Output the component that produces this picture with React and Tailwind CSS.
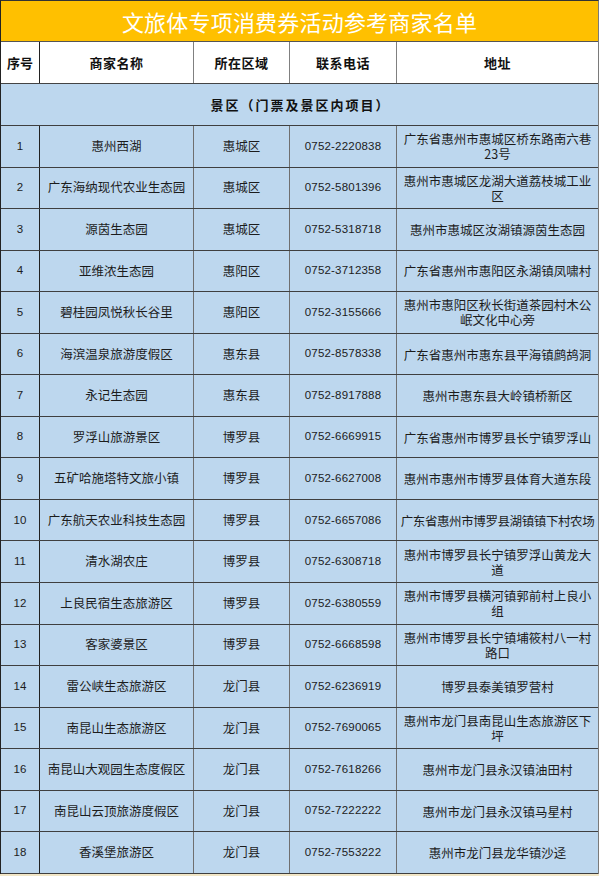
import React from "react";

const merchants = [
  ["1", "惠州西湖", "惠城区", "0752-2220838", "广东省惠州市惠城区桥东路南六巷23号"],
  ["2", "广东海纳现代农业生态园", "惠城区", "0752-5801396", "惠州市惠城区龙湖大道荔枝城工业区"],
  ["3", "源茵生态园", "惠城区", "0752-5318718", "惠州市惠城区汝湖镇源茵生态园"],
  ["4", "亚维浓生态园", "惠阳区", "0752-3712358", "广东省惠州市惠阳区永湖镇凤啸村"],
  ["5", "碧桂园凤悦秋长谷里", "惠阳区", "0752-3155666", "惠州市惠阳区秋长街道茶园村木公岷文化中心旁"],
  ["6", "海滨温泉旅游度假区", "惠东县", "0752-8578338", "广东省惠州市惠东县平海镇鹧鸪洞"],
  ["7", "永记生态园", "惠东县", "0752-8917888", "惠州市惠东县大岭镇桥新区"],
  ["8", "罗浮山旅游景区", "博罗县", "0752-6669915", "广东省惠州市博罗县长宁镇罗浮山"],
  ["9", "五矿哈施塔特文旅小镇", "博罗县", "0752-6627008", "惠州市惠州市博罗县体育大道东段"],
  ["10", "广东航天农业科技生态园", "博罗县", "0752-6657086", "广东省惠州市博罗县湖镇镇下村农场", true],
  ["11", "清水湖农庄", "博罗县", "0752-6308718", "惠州市博罗县长宁镇罗浮山黄龙大道"],
  ["12", "上良民宿生态旅游区", "博罗县", "0752-6380559", "惠州市博罗县横河镇郭前村上良小组"],
  ["13", "客家婆景区", "博罗县", "0752-6668598", "惠州市博罗县长宁镇埔筱村八一村路口"],
  ["14", "雷公峡生态旅游区", "龙门县", "0752-6236919", "博罗县泰美镇罗营村"],
  ["15", "南昆山生态旅游区", "龙门县", "0752-7690065", "惠州市龙门县南昆山生态旅游区下坪"],
  ["16", "南昆山大观园生态度假区", "龙门县", "0752-7618266", "惠州市龙门县永汉镇油田村"],
  ["17", "南昆山云顶旅游度假区", "龙门县", "0752-7222222", "惠州市龙门县永汉镇马星村"],
  ["18", "香溪堡旅游区", "龙门县", "0752-7553222", "惠州市龙门县龙华镇沙迳"],
];

const cols = "grid grid-cols-[39px_154px_96px_107px_201px]";

function HeaderRow() {
  const cell = "flex items-center justify-center font-bold text-[13px] tracking-[0.5px] text-[#111]";
  return (
    <div className={`${cols} h-[42px] bg-white border-b border-[#444]`}>
      <div className={`${cell} border-r border-[#222] tracking-[0px]`}>序号</div>
      <div className={`${cell} border-r border-[#808080]`}>商家名称</div>
      <div className={`${cell} border-r border-[#808080]`}>所在区域</div>
      <div className={`${cell} border-r border-[#808080]`}>联系电话</div>
      <div className={cell}>地址</div>
    </div>
  );
}

function MerchantRow({ row }) {
  const [no, name, area, phone, addr, tight] = row;
  const cell = "flex items-center justify-center text-center text-[#1c1c1c]";
  return (
    <div className={`${cols} h-[41.55px] bg-[#BDD7EE] border-b border-[#3f3f3f]`}>
      <div className={`${cell} border-r border-[#222] text-[11.5px] font-['Liberation_Sans',sans-serif]`}>{no}</div>
      <div className={`${cell} border-r border-[#6f6f6f] text-[12.5px] whitespace-nowrap`}>{name}</div>
      <div className={`${cell} border-r border-[#6f6f6f] text-[12.5px]`}>{area}</div>
      <div className={`${cell} border-r border-[#6f6f6f] text-[11.5px] font-['Liberation_Sans',sans-serif] tracking-[0.2px]`}>{phone}</div>
      <div className={`${cell} text-[12.5px] leading-[15px] ${tight ? "whitespace-nowrap tracking-[-0.4px] px-0" : "px-[4px]"}`}>{addr}</div>
    </div>
  );
}

export default function App() {
  return (
    <div className="w-[600px] h-[876px] bg-white overflow-hidden font-['Noto_Sans_CJK_SC',sans-serif]">
      <div className="w-[599px] border-l border-t border-r border-l-[#222] border-t-[#333] border-r-[#7a7a7a]">
        {/* TITLE */}
        <div className="h-[41px] bg-[#FFC000] border-b border-[#555] flex items-center justify-center text-white text-[22px] tracking-[0.2px]">
          文旅体专项消费券活动参考商家名单
        </div>

        <HeaderRow />

        {/* SECTION */}
        <div className="h-[42px] bg-[#BDD7EE] border-b border-[#3f3f3f] flex items-center justify-center font-bold text-[13px] tracking-[2px] text-[#111] pl-[2px]">
          景区（门票及景区内项目）
        </div>

        {merchants.map((row) => (
          <MerchantRow key={row[0]} row={row} />
        ))}
      </div>
      <div className="w-[599px] h-[4px] bg-[#F2E6C6]" />
    </div>
  );
}
